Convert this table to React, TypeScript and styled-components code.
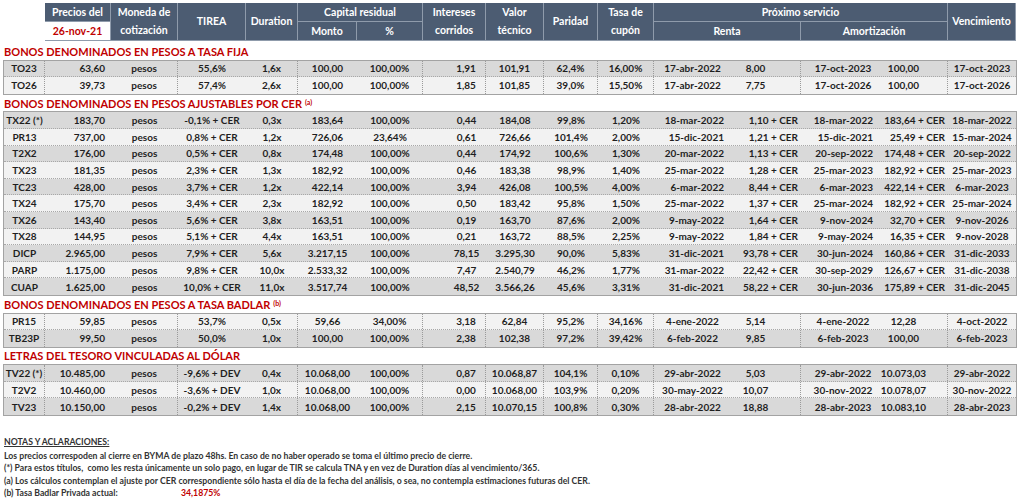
import styled, { createGlobalStyle, css } from 'styled-components';

const GlobalStyle = createGlobalStyle`
  html, body {
    margin: 0;
    padding: 0;
    background: #ffffff;
  }
  body {
    font-family: Lato, "Open Sans", sans-serif;
    color: #262626;
  }
`;

const COLUMNS = '41px 66px 67px 68px 52px 59px 66px 63px 58px 54px 56px 77px 70px 75px 72px 68px';
const ROW_HEIGHT = '16.6px';
const RED = '#c00000';

type Align = 'left' | 'center' | 'right';

type Section = {
  title: string;
  note?: string;
  cer?: boolean;
  firstDark: boolean;
  rows: string[][];
};

const SECTIONS: Section[] = [
  {
    title: 'BONOS DENOMINADOS EN PESOS A TASA FIJA',
    firstDark: true,
    rows: [
      ['TO23', '63,60', 'pesos', '55,6%', '1,6x', '100,00', '100,00%', '1,91', '101,91', '62,4%', '16,00%', '17-abr-2022', '8,00', '17-oct-2023', '100,00', '17-oct-2023'],
      ['TO26', '39,73', 'pesos', '57,4%', '2,6x', '100,00', '100,00%', '1,85', '101,85', '39,0%', '15,50%', '17-abr-2022', '7,75', '17-oct-2026', '100,00', '17-oct-2026'],
    ],
  },
  {
    title: 'BONOS DENOMINADOS EN PESOS AJUSTABLES POR CER',
    note: '(a)',
    cer: true,
    firstDark: true,
    rows: [
      ['TX22 (*)', '183,70', 'pesos', '-0,1% + CER', '0,3x', '183,64', '100,00%', '0,44', '184,08', '99,8%', '1,20%', '18-mar-2022', '1,10 + CER', '18-mar-2022', '183,64 + CER', '18-mar-2022'],
      ['PR13', '737,00', 'pesos', '0,8% + CER', '1,2x', '726,06', '23,64%', '0,61', '726,66', '101,4%', '2,00%', '15-dic-2021', '1,21 + CER', '15-dic-2021', '25,49 + CER', '15-mar-2024'],
      ['T2X2', '176,00', 'pesos', '0,5% + CER', '0,8x', '174,48', '100,00%', '0,44', '174,92', '100,6%', '1,30%', '20-mar-2022', '1,13 + CER', '20-sep-2022', '174,48 + CER', '20-sep-2022'],
      ['TX23', '181,35', 'pesos', '2,3% + CER', '1,3x', '182,92', '100,00%', '0,46', '183,38', '98,9%', '1,40%', '25-mar-2022', '1,28 + CER', '25-mar-2023', '182,92 + CER', '25-mar-2023'],
      ['TC23', '428,00', 'pesos', '3,7% + CER', '1,2x', '422,14', '100,00%', '3,94', '426,08', '100,5%', '4,00%', '6-mar-2022', '8,44 + CER', '6-mar-2023', '422,14 + CER', '6-mar-2023'],
      ['TX24', '175,70', 'pesos', '3,4% + CER', '2,3x', '182,92', '100,00%', '0,50', '183,42', '95,8%', '1,50%', '25-mar-2022', '1,37 + CER', '25-mar-2024', '182,92 + CER', '25-mar-2024'],
      ['TX26', '143,40', 'pesos', '5,6% + CER', '3,8x', '163,51', '100,00%', '0,19', '163,70', '87,6%', '2,00%', '9-may-2022', '1,64 + CER', '9-nov-2024', '32,70 + CER', '9-nov-2026'],
      ['TX28', '144,95', 'pesos', '5,1% + CER', '4,4x', '163,51', '100,00%', '0,21', '163,72', '88,5%', '2,25%', '9-may-2022', '1,84 + CER', '9-may-2024', '16,35 + CER', '9-nov-2028'],
      ['DICP', '2.965,00', 'pesos', '7,9% + CER', '5,6x', '3.217,15', '100,00%', '78,15', '3.295,30', '90,0%', '5,83%', '31-dic-2021', '93,78 + CER', '30-jun-2024', '160,86 + CER', '31-dic-2033'],
      ['PARP', '1.175,00', 'pesos', '9,8% + CER', '10,0x', '2.533,32', '100,00%', '7,47', '2.540,79', '46,2%', '1,77%', '31-mar-2022', '22,42 + CER', '30-sep-2029', '126,67 + CER', '31-dic-2038'],
      ['CUAP', '1.625,00', 'pesos', '10,0% + CER', '11,0x', '3.517,74', '100,00%', '48,52', '3.566,26', '45,6%', '3,31%', '31-dic-2021', '58,22 + CER', '30-jun-2036', '175,89 + CER', '31-dic-2045'],
    ],
  },
  {
    title: 'BONOS DENOMINADOS EN PESOS A TASA BADLAR',
    note: '(b)',
    firstDark: false,
    rows: [
      ['PR15', '59,85', 'pesos', '53,7%', '0,5x', '59,66', '34,00%', '3,18', '62,84', '95,2%', '34,16%', '4-ene-2022', '5,14', '4-ene-2022', '12,28', '4-oct-2022'],
      ['TB23P', '99,50', 'pesos', '50,0%', '1,0x', '100,00', '100,00%', '2,38', '102,38', '97,2%', '39,42%', '6-feb-2022', '9,85', '6-feb-2023', '100,00', '6-feb-2023'],
    ],
  },
  {
    title: 'LETRAS DEL TESORO VINCULADAS AL DÓLAR',
    firstDark: true,
    rows: [
      ['TV22 (*)', '10.485,00', 'pesos', '-9,6% + DEV', '0,4x', '10.068,00', '100,00%', '0,87', '10.068,87', '104,1%', '0,10%', '29-abr-2022', '5,03', '29-abr-2022', '10.073,03', '29-abr-2022'],
      ['T2V2', '10.460,00', 'pesos', '-3,6% + DEV', '1,0x', '10.068,00', '100,00%', '0,00', '10.068,00', '103,9%', '0,20%', '30-may-2022', '10,07', '30-nov-2022', '10.078,07', '30-nov-2022'],
      ['TV23', '10.150,00', 'pesos', '-0,2% + DEV', '1,4x', '10.068,00', '100,00%', '2,15', '10.070,15', '100,8%', '0,30%', '28-abr-2022', '18,88', '28-abr-2023', '10.083,10', '28-abr-2023'],
    ],
  },
];

// columns followed by a dotted divider in the plain sections
const DIVIDER_AFTER = [0, 2, 4, 6, 7, 8, 9, 10, 12, 14];

type CellFormat = { align: Align; pl: number; pr: number };

const formatFor = (col: number, cer?: boolean): CellFormat => {
  if (col === 1) return { align: 'right', pl: 0, pr: 6 };
  if (col === 7) return { align: 'center', pl: 24, pr: 0 };
  if (cer) {
    if (col === 11) return { align: 'right', pl: 0, pr: 7 };
    if (col >= 12 && col <= 14) return { align: 'right', pl: 0, pr: 3 };
  } else {
    if (col === 12) return { align: 'center', pl: 0, pr: 20 };
    if (col === 13) return { align: 'center', pl: 9, pr: 0 };
    if (col === 14) return { align: 'center', pl: 0, pr: 16 };
  }
  return { align: 'center', pl: 0, pr: 0 };
};

const Page = styled.div`
  padding: 3px 0 0 3px;
  width: 1016px;
`;

const HeaderGrid = styled.div`
  display: grid;
  grid-template-columns: ${COLUMNS};
  grid-template-rows: 19px 19px;
  margin-left: 1px;
  margin-bottom: 2px;
`;

const HeadCell = styled.div<{ $col: string; $row: string; $light?: boolean }>`
  grid-column: ${(p) => p.$col};
  grid-row: ${(p) => p.$row};
  box-sizing: border-box;
  display: flex;
  align-items: center;
  justify-content: center;
  text-align: center;
  background: ${(p) => (p.$light ? '#ffffff' : '#4c5c72')};
  color: ${(p) => (p.$light ? RED : '#ffffff')};
  border-right: 1px solid #8f9bab;
  border-bottom: 1px solid #8f9bab;
  font-size: 10.5px;
  font-weight: 700;
  line-height: 17px;
  white-space: nowrap;
`;

const HeadStack = styled.div`
  display: flex;
  flex-direction: column;
  line-height: 17.5px;
`;

const SectionTitle = styled.div`
  height: ${ROW_HEIGHT};
  display: flex;
  align-items: center;
  color: ${RED};
  font-size: 11px;
  font-weight: 700;
  white-space: nowrap;
  padding-left: 1px;
`;

const Note = styled.sup`
  font-size: 7px;
  margin-left: 3px;
  position: relative;
  top: -1px;
`;

const Group = styled.div`
  border: 1px solid #a3a3a3;
  width: max-content;
`;

const Row = styled.div<{ $dark: boolean; $last: boolean }>`
  display: grid;
  grid-template-columns: ${COLUMNS};
  height: ${ROW_HEIGHT};
  box-sizing: border-box;
  background: ${(p) => (p.$dark ? '#d9d9d9' : '#f2f2f2')};
  ${(p) =>
    !p.$last &&
    css`
      border-bottom: 1px dotted #a8a8a8;
    `}
`;

const Cell = styled.div<{ $align: Align; $pl: number; $pr: number; $divider: boolean }>`
  display: flex;
  align-items: center;
  justify-content: ${(p) =>
    p.$align === 'right' ? 'flex-end' : p.$align === 'left' ? 'flex-start' : 'center'};
  padding: 0 ${(p) => p.$pr}px 0 ${(p) => p.$pl}px;
  box-sizing: border-box;
  font-size: 10px;
  font-weight: 700;
  color: #1f1f1f;
  white-space: nowrap;
  overflow: hidden;
  ${(p) =>
    p.$divider &&
    css`
      border-right: 1px dotted #9a9a9a;
    `}
`;

const Notes = styled.div`
  margin-top: 20px;
  font-size: 8.7px;
  font-weight: 700;
  color: #333;
  line-height: 12.6px;
  padding-left: 1px;
`;

const NotesTitle = styled.div`
  text-decoration: underline;
  margin-bottom: 1px;
`;

const BadlarLine = styled.div`
  display: grid;
  grid-template-columns: 177px auto;
`;

const BadlarValue = styled.span`
  color: ${RED};
`;

const Header = () => (
  <HeaderGrid>
    <HeadCell $col="2" $row="1">Precios del</HeadCell>
    <HeadCell $col="2" $row="2" $light>26-nov-21</HeadCell>
    <HeadCell $col="3" $row="1 / 3">
      <HeadStack>
        <span>Moneda de</span>
        <span>cotización</span>
      </HeadStack>
    </HeadCell>
    <HeadCell $col="4" $row="1 / 3">TIREA</HeadCell>
    <HeadCell $col="5" $row="1 / 3">Duration</HeadCell>
    <HeadCell $col="6 / 8" $row="1">Capital residual</HeadCell>
    <HeadCell $col="6" $row="2">Monto</HeadCell>
    <HeadCell $col="7" $row="2">%</HeadCell>
    <HeadCell $col="8" $row="1 / 3">
      <HeadStack>
        <span>Intereses</span>
        <span>corridos</span>
      </HeadStack>
    </HeadCell>
    <HeadCell $col="9" $row="1 / 3">
      <HeadStack>
        <span>Valor</span>
        <span>técnico</span>
      </HeadStack>
    </HeadCell>
    <HeadCell $col="10" $row="1 / 3">Paridad</HeadCell>
    <HeadCell $col="11" $row="1 / 3">
      <HeadStack>
        <span>Tasa de</span>
        <span>cupón</span>
      </HeadStack>
    </HeadCell>
    <HeadCell $col="12 / 16" $row="1">Próximo servicio</HeadCell>
    <HeadCell $col="12 / 14" $row="2">Renta</HeadCell>
    <HeadCell $col="14 / 16" $row="2">Amortización</HeadCell>
    <HeadCell $col="16" $row="1 / 3">Vencimiento</HeadCell>
  </HeaderGrid>
);

const SectionBlock = ({ section }: { section: Section }) => (
  <>
    <SectionTitle>
      {section.title}
      {section.note && <Note>{section.note}</Note>}
    </SectionTitle>
    <Group>
      {section.rows.map((row, i) => (
        <Row
          key={row[0]}
          $dark={section.firstDark ? i % 2 === 0 : i % 2 === 1}
          $last={i === section.rows.length - 1}
        >
          {row.map((value, col) => {
            const { align, pl, pr } = formatFor(col, section.cer);
            return (
              <Cell
                key={col}
                $align={align}
                $pl={pl}
                $pr={pr}
                $divider={!section.cer && DIVIDER_AFTER.includes(col)}
              >
                {value}
              </Cell>
            );
          })}
        </Row>
      ))}
    </Group>
  </>
);

const App = () => (
  <Page>
    <GlobalStyle />
    <Header />
    {SECTIONS.map((section) => (
      <SectionBlock key={section.title} section={section} />
    ))}
    <Notes>
      <NotesTitle>NOTAS Y ACLARACIONES:</NotesTitle>
      <div>
        Los precios correspoden al cierre en BYMA de plazo 48hs. En caso de no haber operado se toma el último precio de cierre.
      </div>
      <div>
        (*) Para estos títulos,&nbsp; como les resta únicamente un solo pago, en lugar de TIR se calcula TNA y en vez de Duration días al vencimiento/365.
      </div>
      <div>
        (a) Los cálculos contemplan el ajuste por CER correspondiente sólo hasta el día de la fecha del análisis, o sea, no contempla estimaciones futuras del CER.
      </div>
      <BadlarLine>
        <span>(b) Tasa Badlar Privada actual:</span>
        <BadlarValue>34,1875%</BadlarValue>
      </BadlarLine>
    </Notes>
  </Page>
);

export default App;
